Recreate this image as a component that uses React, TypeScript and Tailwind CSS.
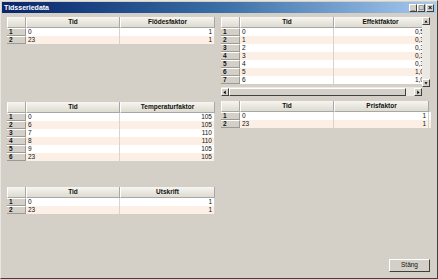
import type { ReactNode } from "react";

type Row = [string, string];

const flode: Row[] = [["0", "1"], ["23", "1"]];
const effekt: Row[] = [
  ["0", "0,5"], ["1", "0,3"], ["2", "0,3"], ["3", "0,3"], ["4", "0,3"], ["5", "1,0"], ["6", "1,0"],
];
const temp: Row[] = [["0", "105"], ["6", "105"], ["7", "110"], ["8", "110"], ["9", "105"], ["23", "105"]];
const pris: Row[] = [["0", "1"], ["23", "1"]];
const utskrift: Row[] = [["0", "1"], ["23", "1"]];

const HeadCell = ({ w, children }: { w: string; children?: ReactNode }) => (
  <div className={`${w} h-[11px] shrink-0 flex items-center justify-center border-r border-b border-[#a7a6aa] border-l border-l-white bg-gradient-to-b from-[#f6f5f0] to-[#dedbcf] font-bold`}>
    {children}
  </div>
);

const Grid = ({ title, rows, tidW, valW }: { title: string; rows: Row[]; tidW: string; valW: string }) => (
  <div className="text-[6.5px] leading-none text-[#111]">
    <div className="flex">
      <HeadCell w="w-[19px]" />
      <HeadCell w={tidW}>Tid</HeadCell>
      <HeadCell w={valW}>{title}</HeadCell>
    </div>
    {rows.map((r, i) => (
      <div key={i} className={`flex h-[8px] ${i % 2 ? "bg-[#fbefe6]" : "bg-white"}`}>
        <div className="w-[19px] shrink-0 bg-[#d4d0c8] border-b border-r border-[#9c9a94] border-t border-t-white pl-[2px] font-bold flex items-center">{i + 1}</div>
        <div className={`${tidW} shrink-0 border-r border-[#d8d4cc] pl-[2px] flex items-center`}>{r[0]}</div>
        <div className={`${valW} shrink-0 pr-[2px] flex items-center justify-end border-r border-[#d8d4cc]`}>{r[1]}</div>
      </div>
    ))}
  </div>
);

const Arrow = ({ dir }: { dir: "up" | "down" | "left" | "right" }) => {
  const pts = {
    up: "2,6 4,3 6,6",
    down: "2,3 4,6 6,3",
    left: "5,2 2,4.5 5,7",
    right: "3,2 6,4.5 3,7",
  }[dir];
  return (
    <div className="w-[8px] h-[8px] bg-[#d4d0c8] border border-t-white border-l-white border-r-[#404040] border-b-[#404040] flex items-center justify-center">
      <svg width="8" height="8" viewBox="0 0 8 8"><polygon points={pts} fill="#000" /></svg>
    </div>
  );
};

export default function App() {
  return (
    <div className="w-[438px] h-[279px] bg-[#d4d0c8] border border-t-[#e8e6e0] border-l-[#e8e6e0] border-r-[#404040] border-b-[#404040] font-['Liberation_Sans',Arial,sans-serif] flex flex-col overflow-hidden">
      <div className="h-[11px] mx-[1px] mt-[1px] bg-gradient-to-r from-[#0a246a] via-[#3a6ea5] to-[#a6caf0] flex items-center justify-between pl-[2px] pr-[2px]">
        <span className="text-white font-bold text-[7px] leading-none">Tidsseriedata</span>
        <div className="flex gap-[0px]">
          {["_", "□", "×"].map((c, i) => (
            <div key={i} className={`w-[8px] h-[8px] bg-[#d4d0c8] border border-t-white border-l-white border-r-[#404040] border-b-[#404040] text-[7px] leading-none font-bold flex items-center justify-center ${i === 2 ? "ml-[1px]" : ""}`}>{c}</div>
          ))}
        </div>
      </div>

      <div className="flex-1 flex gap-[6px] pl-[6px] pt-[4px]">
        <div className="w-[208px] flex flex-col">
          <div className="h-[85px]">
            <Grid title="Flödesfaktor" rows={flode} tidW="w-[94px]" valW="w-[95px]" />
          </div>
          <div className="h-[85px]">
            <Grid title="Temperaturfaktor" rows={temp} tidW="w-[94px]" valW="w-[95px]" />
          </div>
          <div>
            <Grid title="Utskrift" rows={utskrift} tidW="w-[94px]" valW="w-[95px]" />
          </div>
        </div>

        <div className="w-[210px] flex flex-col">
          <div className="h-[84px] flex flex-col">
            <div className="flex">
              <div className="w-[201px] h-[70px] overflow-hidden">
                <div className="w-[206px]">
                  <Grid title="Effektfaktor" rows={effekt} tidW="w-[94px]" valW="w-[93px]" />
                </div>
              </div>
              <div className="w-[8px] h-[70px] bg-[#ebe9e3] flex flex-col justify-between">
                <Arrow dir="up" />
                <Arrow dir="down" />
              </div>
            </div>
            <div className="flex h-[9px]">
              <div className="w-[201px] h-[9px] bg-[#ebe9e3] flex items-center">
                <Arrow dir="left" />
                <div className="flex-1 h-[8px] bg-[#d4d0c8] border border-t-white border-l-white border-r-[#404040] border-b-[#404040]" />
                <div className="w-[8px]" />
                <Arrow dir="right" />
              </div>
            </div>
          </div>
          <div>
            <Grid title="Prisfaktor" rows={pris} tidW="w-[94px]" valW="w-[95px]" />
          </div>
          <div className="flex-1 flex items-end justify-end pr-[1px] pb-[6px]">
            <button className="w-[41px] h-[13px] bg-[#d4d0c8] border border-t-white border-l-white border-r-[#404040] border-b-[#404040] text-[6.5px] leading-none text-[#111]">
              Stäng
            </button>
          </div>
        </div>
      </div>
    </div>
  );
}
